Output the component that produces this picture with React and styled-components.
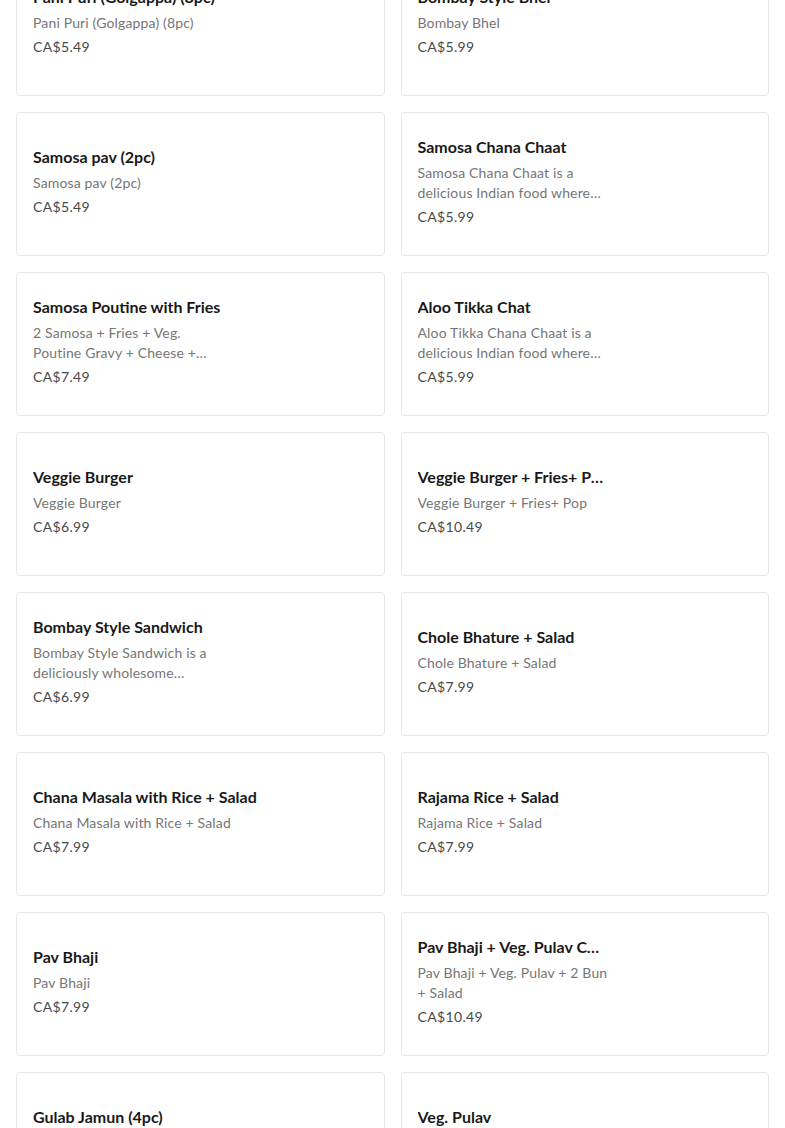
import React from 'react';
import styled, { createGlobalStyle } from 'styled-components';

const GlobalStyle = createGlobalStyle`
  * { box-sizing: border-box; }
  body {
    margin: 0;
    background: #ffffff;
    font-family: Lato, "Noto Sans", "Liberation Sans", sans-serif;
    -webkit-font-smoothing: antialiased;
  }
`;

const MenuGrid = styled.div`
  display: grid;
  grid-template-columns: 1fr 1fr;
  gap: 16px;
  padding: 0 16px;
  margin-top: -48px;
`;

const Card = styled.div`
  height: 144px;
  border: 1px solid #e7e7e7;
  border-radius: 4px;
  padding: 0 16px 6px;
  display: flex;
  flex-direction: column;
  justify-content: center;
  background: #fff;
`;

const TextColumn = styled.div`
  width: ${({ $wide }) => ($wide ? '240px' : '196px')};
  display: flex;
  flex-direction: column;
  gap: 4px;
`;

const Title = styled.div`
  max-width: ${({ $wide }) => ($wide ? '240px' : '188px')};
  font-size: 16px;
  line-height: 24px;
  font-weight: 700;
  color: #191919;
  white-space: nowrap;
  overflow: hidden;
  text-overflow: ellipsis;
`;

const Description = styled.div`
  font-size: 14px;
  line-height: 20px;
  color: #767676;
  letter-spacing: 0.15px;
  display: -webkit-box;
  -webkit-line-clamp: 2;
  -webkit-box-orient: vertical;
  overflow: hidden;
`;

const Price = styled.div`
  font-size: 14px;
  line-height: 20px;
  color: #494949;
  letter-spacing: 0.35px;
`;

const items = [
  { title: 'Pani Puri (Golgappa) (8pc)', desc: 'Pani Puri (Golgappa) (8pc)', price: 'CA$5.49' },
  { title: 'Bombay Style Bhel', desc: 'Bombay Bhel', price: 'CA$5.99' },
  { title: 'Samosa pav (2pc)', desc: 'Samosa pav (2pc)', price: 'CA$5.49' },
  { title: 'Samosa Chana Chaat', desc: 'Samosa Chana Chaat is a delicious Indian food where crispy samosas are topped with chana masala.', price: 'CA$5.99' },
  { title: 'Samosa Poutine with Fries', desc: '2 Samosa + Fries + Veg. Poutine Gravy + Cheese + Onion', price: 'CA$7.49' },
  { title: 'Aloo Tikka Chat', desc: 'Aloo Tikka Chana Chaat is a delicious Indian food where aloo tikki is topped with chana.', price: 'CA$5.99' },
  { title: 'Veggie Burger', desc: 'Veggie Burger', price: 'CA$6.99' },
  { title: 'Veggie Burger + Fries+ Pop', desc: 'Veggie Burger + Fries+ Pop', price: 'CA$10.49' },
  { title: 'Bombay Style Sandwich', desc: 'Bombay Style Sandwich is a deliciously wholesome sandwich packed with vegetables.', price: 'CA$6.99' },
  { title: 'Chole Bhature + Salad', desc: 'Chole Bhature + Salad', price: 'CA$7.99' },
  { title: 'Chana Masala with Rice + Salad', desc: 'Chana Masala with Rice + Salad', price: 'CA$7.99', wide: true },
  { title: 'Rajama Rice + Salad', desc: 'Rajama Rice + Salad', price: 'CA$7.99' },
  { title: 'Pav Bhaji', desc: 'Pav Bhaji', price: 'CA$7.99' },
  { title: 'Pav Bhaji + Veg. Pulav Combo', desc: 'Pav Bhaji + Veg. Pulav + 2 Bun + Salad', price: 'CA$10.49' },
  { title: 'Gulab Jamun (4pc)', desc: 'Gulab Jamun (4pc)', price: 'CA$3.99' },
  { title: 'Veg. Pulav', desc: 'Veg. Pulav', price: 'CA$6.99' },
];

const MenuCard = ({ item }) => (
  <Card>
    <TextColumn $wide={item.wide}>
      <Title $wide={item.wide}>{item.title}</Title>
      <Description>{item.desc}</Description>
      <Price>{item.price}</Price>
    </TextColumn>
  </Card>
);

export default function App() {
  return (
    <>
      <GlobalStyle />
      <MenuGrid>
        {items.map((item) => (
          <MenuCard key={item.title} item={item} />
        ))}
      </MenuGrid>
    </>
  );
}
